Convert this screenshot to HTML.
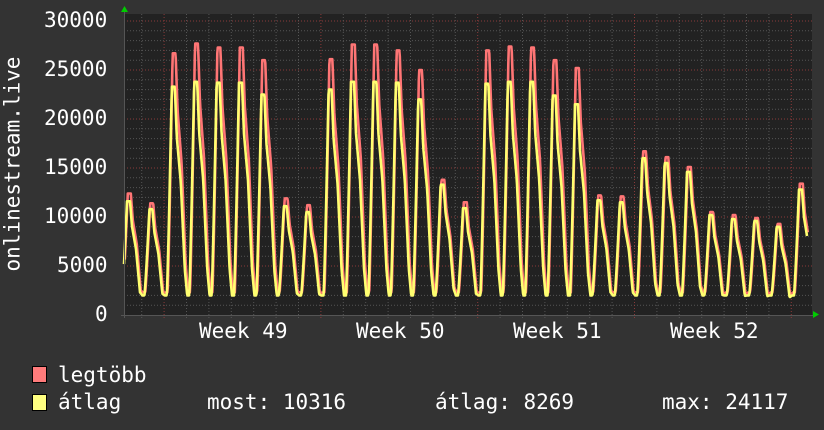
<!DOCTYPE html>
<html><head><meta charset="utf-8"><style>
html,body{margin:0;padding:0;background:#333;}
body{width:824px;height:430px;overflow:hidden;position:relative;font-family:"DejaVu Sans Mono","Liberation Mono",monospace;color:#fff;}
.t{position:absolute;font-size:21px;white-space:pre;line-height:1;}
.box{position:absolute;width:13px;height:15px;border:1px solid #000;}
</style></head><body>
<svg id="g" width="824" height="430" style="position:absolute;left:0;top:0"></svg>
<div class="t" style="left:44px;top:10px">30000</div>
<div class="t" style="left:44px;top:59px">25000</div>
<div class="t" style="left:44px;top:108px">20000</div>
<div class="t" style="left:44px;top:157px">15000</div>
<div class="t" style="left:44px;top:206px">10000</div>
<div class="t" style="left:57px;top:255px">5000</div>
<div class="t" style="left:95px;top:304px">0</div>
<div class="t" style="left:-94px;top:154px;transform:rotate(-90deg);width:214px;text-align:center">onlinestream.live</div>
<div class="t" style="left:199px;top:321px">Week 49</div>
<div class="t" style="left:356px;top:321px">Week 50</div>
<div class="t" style="left:513px;top:321px">Week 51</div>
<div class="t" style="left:670px;top:321px">Week 52</div>
<div class="box" style="left:32px;top:366px;background:#ff7b7b"></div>
<div class="box" style="left:32px;top:394px;background:#ffff80"></div>
<div class="t" style="left:58px;top:365px">legtöbb</div>
<div class="t" style="left:58px;top:392px">átlag</div>
<div class="t" style="left:207px;top:392px">most: 10316</div>
<div class="t" style="left:435px;top:392px">átlag: 8269</div>
<div class="t" style="left:662px;top:392px">max: 24117</div>
<script>
var s='';
s+='<rect x="124" y="14" width="688" height="301" fill="#222"/>';
function Y(v){return 315-v*0.0098;}
for(var i=1;i<=30;i++){var y=Y(i*1000);var maj=i%5==0;
s+='<line x1="124" x2="812" y1="'+y+'" y2="'+y+'" stroke="'+(maj?'#8a3a3a':'#555')+'" stroke-width="1" stroke-dasharray="1,2"/>';}
for(var x=141.7;x<812;x+=22.4){var maj=false;for(var k=0;k<6;k++){if(Math.abs(x-(163.3+156.8*k))<2)maj=true;}
s+='<line y1="14" y2="318" x1="'+x+'" x2="'+x+'" stroke="'+(maj?'#8a3a3a':'#555')+'" stroke-width="1" stroke-dasharray="1,2"/>';}
var R=[12.4,11.4,26.7,27.7,27.3,27.3,26.0,11.9,11.2,26.1,27.6,27.6,27.0,25.0,13.8,11.5,27.0,27.4,27.3,26.0,25.2,12.2,12.1,16.7,16.1,15.1,10.5,10.2,9.9,9.3,13.4];
var A=[11.6,10.8,23.3,23.8,23.7,23.7,22.5,11.1,10.5,23.0,23.8,23.8,23.7,22.0,13.3,10.9,23.6,23.8,23.8,22.4,21.5,11.7,11.5,16.0,15.5,14.6,10.2,9.8,9.6,9.0,12.8];
function val(x,P,m){var k=Math.floor((x-120)/22.4);var d=x-120-22.4*k;var p=P[Math.max(0,Math.min(30,k))]*1000;
if(d<2)return m;if(d<7)return m+(p-m)*Math.pow((d-2)/5,1.2);if(d<10)return p;if(d<12)return p-(p*0.22)*(d-10)/2;
if(d<16)return p*0.78-(p*0.2)*(d-12)/4;if(d<20)return p*0.58-(p*0.38)*(d-16)/4;return p*0.2-(p*0.2-m)*(d-20)/2.4;}
function line(P,m,col,off){var pts=[];for(var x=124;x<=807;x+=0.5){pts.push((x+off).toFixed(1)+','+Y(val(x,P,m)).toFixed(1));}
return '<polyline fill="none" stroke="'+col+'" stroke-width="2.6" stroke-linejoin="round" points="'+pts.join(' ')+'"/>';}
s+=line(R,2300,'#ff7575',0.8);
s+=line(A,2000,'#ffff70',0);
s+='<line x1="124.5" x2="124.5" y1="12" y2="318" stroke="#555"/>';
s+='<line x1="121" x2="814" y1="315.5" y2="315.5" stroke="#555"/>';
s+='<polygon points="121,12 124.5,6 128,12" fill="#0c0"/>';
s+='<polygon points="813,311 819,314.5 813,318" fill="#0c0"/>';
document.getElementById('g').innerHTML=s;
</script>
</body></html>
